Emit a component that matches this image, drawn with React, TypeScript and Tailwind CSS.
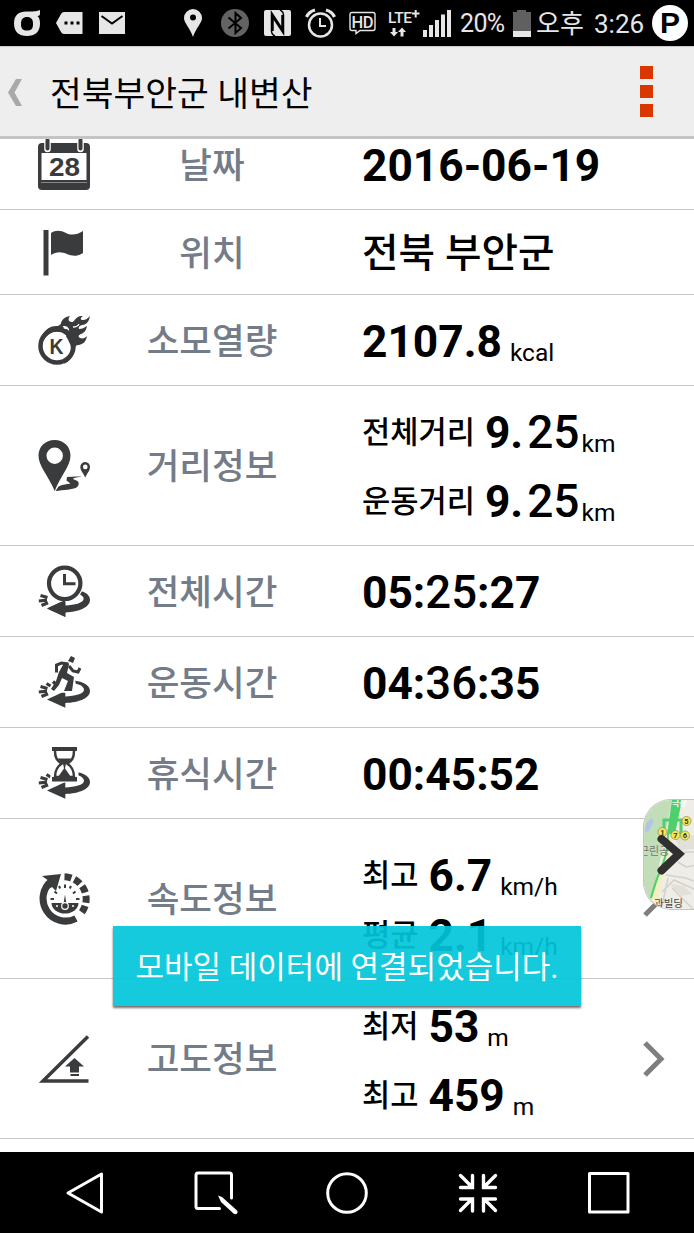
import type {ReactNode} from 'react';

const DARK = '#393b3d';

function CalendarIcon() {
  return (
    <svg width="52" height="52" viewBox="0 0 52 52">
      <rect x="0" y="5" width="52" height="47" rx="4" fill={DARK} />
      <rect x="3.5" y="15" width="45" height="27" fill="#fff" />
      <path d="M3 44.5h46" stroke="#85878a" strokeWidth="1" />
      <path d="M9.5 3v8M42.5 3v8" stroke="#fff" strokeWidth="6.500" strokeLinecap="round" />
      <path d="M9.5 2v8.500M42.500 2v8.500" stroke={DARK} strokeWidth="4" strokeLinecap="round" />
      <text
        x="26.500"
        y="38"
        textAnchor="middle"
        textLength="31"
        lengthAdjust="spacingAndGlyphs"
        fontFamily="Liberation Sans, sans-serif"
        fontWeight="bold"
        fontSize="25"
        fill={DARK}
      >
        28
      </text>
    </svg>
  );
}

function FlagIcon() {
  return (
    <svg width="52" height="52" viewBox="0 0 52 52" fill={DARK}>
      <rect x="5.500" y="4" width="5" height="45.500" />
      <path d="M13 7c5-3.500 10-2.500 15 0s11 2 17-2v22c-6 4-11 3-16 1s-10-3-16 1z" />
    </svg>
  );
}

function CalorieIcon() {
  return (
    <svg width="52" height="52" viewBox="0 0 52 52">
      <circle cx="19" cy="32" r="16.500" fill="none" stroke={DARK} strokeWidth="4.500" />
      <path d="M4 21Q10 11 20 12l3-2 3 4-3 4Q12 15 5 27z" fill={DARK} />
      <path
        d="M23 12c-1-5 3-9 9-10-2 3-2 5 1 6 4 1 4-7 12-6-3 2-3 4 0 4 3 0 5-2 7-4-1 6-4 9-8 9-3 1-4 2-3 4 3 0 5-1 8-3-1 5-3 7-6 8-3 1-3 3-1 4 3 1 5 0 7-2-1 6-4 8-8 9-3 0-4 1-4 4-1 7-5 12-11 15 6-8 9-16 5-22-1-4-3-4-3-7-2-1-4-2-3-5 2-2 5-1 6 1 1-2-2-5-4-5-2 0-3 0-4 0z"
        fill={DARK}
      />
      <path d="M35 13c3 0 5-1 6-3" fill="none" stroke="#fff" strokeWidth="1.300" />
      <text
        x="18.500"
        y="40"
        textAnchor="middle"
        fontFamily="Liberation Sans, sans-serif"
        fontWeight="bold"
        fontSize="22"
        textLength="14"
        lengthAdjust="spacingAndGlyphs"
        fill={DARK}
      >
        K
      </text>
    </svg>
  );
}

function RouteIcon() {
  return (
    <svg width="52" height="52" viewBox="0 0 52 52" fill={DARK}>
      <path
        fillRule="evenodd"
        d="M16.700 0C7 0 .5 7 .5 15.500.500 26 10 35 16.700 51 23 35 32.500 26 32.500 15.500 32.500 7 26 0 16.700 0zm0 7.500a8.200 8.200 0 1 1 0 16.400 8.200 8.200 0 0 1 0-16.400z"
      />
      <path
        fillRule="evenodd"
        d="M47.300 22a5 5 0 0 0-5 5c0 3.500 3 6 5 10.500 2-4.500 4.700-7 4.700-10.500a4.800 4.800 0 0 0-4.700-5zm0 2.600a2.300 2.300 0 1 1 0 4.600 2.300 2.300 0 0 1 0-4.600z"
      />
      <path d="M47 36l-18 1-.5 3.500 4 3-8.500 1.500-3.500 1.500-3 4.500c8-1 17-1.500 21-3.500 2.500-1.500 3-5 1-6.500l-4.500-2c1-1.500 4-1.500 11.500-3z" />
    </svg>
  );
}

// Curved arrow shared by the three duration icons
function OrbitArrow({open = false}: {open?: boolean}) {
  return (
    <>
      <path
        d={
          open
            ? 'M36 24.500C47 26 52 30 52 35c0 7-11 11.500-24.700 12v4.800L9 43.500 27.300 35v5.500C37 40 45.500 38 46 34 46 30.500 42 28.500 37 27.500z'
            : 'M42.500 26C50 28 52 31.500 52 35c0 7-11 12-24.700 12.500v4.500L9 43.500 27.300 35v5.500C37 40 44.500 38 45.500 34.500 46.200 32 44 30.500 41 29z'
        }
        fill={DARK}
      />
      <path d="M3.500 40.500l6.500-2.800M.8 36l8.200-.8M2.500 30.500l7 2" stroke={DARK} strokeWidth="3.200" />
      {open && <path d="M8.500 27.500l4 2.500M15 25.500l2.500 2.500" stroke={DARK} strokeWidth="3.200" />}
    </>
  );
}

function ClockIcon() {
  return (
    <svg width="52" height="52" viewBox="0 0 52 52">
      <OrbitArrow />
      <circle cx="26.700" cy="18.300" r="19" fill="#fff" />
      <path d="M9 43.500L27.300 35v16.800z" fill={DARK} />
      <circle cx="26.700" cy="18.300" r="15.700" fill="#fff" stroke={DARK} strokeWidth="4.200" />
      <path d="M26.500 9v9.700h11" fill="none" stroke={DARK} strokeWidth="3" />
    </svg>
  );
}

function RunnerIcon() {
  return (
    <svg width="52" height="52" viewBox="0 0 52 52">
      <OrbitArrow open />
      <path d="M28 17l9 6 2 13-10 1-14-1 8-13z" fill="#fff" />
      <path d="M33 0l4 2-2 5-5-2z" fill={DARK} />
      <path
        d="M18.500 16.500V9l5-2 7 1M31 10l4 5 5 1 2-4"
        fill="none"
        stroke={DARK}
        strokeWidth="3"
      />
      <path
        d="M26 7l5 1-2 9 7 4-2 14h-8l4-10-6-3-3 7-5 6-3-2 5-8 3-9z"
        fill={DARK}
      />
    </svg>
  );
}

function HourglassIcon() {
  return (
    <svg width="52" height="52" viewBox="0 0 52 52">
      <OrbitArrow open />
      <path d="M12.500 1h28v34.500h-28z" fill="#fff" />
      <path d="M14 0h25v4H14zM14 30h25v4.500H14z" fill={DARK} />
      <path
        d="M17 4c0 7 2 10 7 12.500-5 3-7 7-7 13.500h19c0-6.500-2-10.500-7-13.500 5-2.500 7-5.500 7-12.500"
        fill="#fff"
        stroke={DARK}
        strokeWidth="2.500"
      />
      <path d="M19 11.500h15l-6 5-1 5 6 8.500H20l6-8.500-1-5z" fill={DARK} />
    </svg>
  );
}

function GaugeIcon() {
  return (
    <svg width="52" height="52" viewBox="0 0 52 52">
      <path d="M13.500 8A22.500 22.500 0 0 0 38 45.500" fill="none" stroke={DARK} strokeWidth="7" />
      <path d="M4 3l19-2-5 17-4-4-5 3 2-9z" fill={DARK} />
      <path
        d="M26.500 3.800A22.300 22.300 0 0 1 42 41.500"
        fill="none"
        stroke={DARK}
        strokeWidth="7"
        strokeDasharray="7 3.300"
      />
      <path d="M13.500 30h27a13.500 10.500 0 0 1-27 0z" fill={DARK} />
      <path
        d="M12.500 26h3.500M38 26h3.500M16.500 18.500l2.500 2M35 20.500l2.500-2M21 13l1.200 2.500M33 13l-1.200 2.500M27 11.500v3.500"
        stroke={DARK}
        strokeWidth="2"
      />
      <path d="M25.500 31L27 21.500l1.500 9.500z" fill={DARK} />
      <circle cx="27" cy="33" r="3.300" fill={DARK} stroke="#fff" strokeWidth="1.200" />
      <path d="M18 33h2M34 33h2" stroke="#fff" strokeWidth="1.500" />
    </svg>
  );
}

function SlopeIcon() {
  return (
    <svg width="52" height="52" viewBox="0 0 52 52">
      <path d="M50 3.500L5 48h45.500" fill="none" stroke={DARK} strokeWidth="3.500" />
      <path d="M36.500 25l9.500 8.500h-5v6h-9v-6h-5zM32.500 41h8.500v2h-8.500z" fill={DARK} />
    </svg>
  );
}

function Chevron() {
  return (
    <svg className="shrink-0" width="22" height="38" viewBox="0 0 22 38" fill="none">
      <path d="M2 3l16 16L2 35" stroke="#7e7e7e" strokeWidth="5" />
    </svg>
  );
}

interface RowProps {
  icon: ReactNode;
  label: string;
  height?: string;
  more?: boolean;
  children: ReactNode;
}

function Row({icon, label, height = 'h-[91px]', more, children}: RowProps) {
  return (
    <div className={`flex items-center border-b border-[#c6c6c6] pl-[38px] ${height}`}>
      {icon}
      <span className="mt-[5px] w-[244px] text-center text-[35.500px] leading-none font-medium text-[#737c88]">
        {label}
      </span>
      <div className="ml-7 w-[281px] pt-1 whitespace-nowrap">{children}</div>
      {more && <Chevron />}
    </div>
  );
}

function Line({children, height = 'h-[60px] leading-[60px]'}: {children: ReactNode; height?: string}) {
  return <div className={`flex items-baseline ${height}`}>{children}</div>;
}

function Big({children}: {children: ReactNode}) {
  return <span className="text-[44.300px] font-bold">{children}</span>;
}

function Mid({children}: {children: ReactNode}) {
  return <span className="text-[45.500px] font-medium">{children}</span>;
}

function Unit({children, gap = 'ml-2'}: {children: ReactNode; gap?: string}) {
  return <span className={`relative top-[4px] text-[24.500px] ${gap}`}>{children}</span>;
}

function Name({children}: {children: ReactNode}) {
  return (
    <span className="relative -top-[5px] mr-[10px] text-[30.700px] font-medium">{children}</span>
  );
}

function StatusBar() {
  return (
    <div className="flex h-[46px] items-center bg-black text-[#e6e6e6]">
      <svg className="ml-[14px]" width="26" height="26" viewBox="0 0 26 26">
        <path
          fillRule="evenodd"
          fill="#e6e6e6"
          d="M26 0v3.500q0 2.500-2.500 2.500 2.500 2 2.500 7.500C26 22 21 26 13 26S0 22 0 13.500 5 1.500 12 1.500c7 0 11 0 14-1.500zM13 7c-4 0-6 2-6 7s2 6.500 6 6.500 6-1.500 6-6.500-2-7-6-7z"
        />
      </svg>
      <svg className="ml-4" width="27" height="22" viewBox="0 0 27 22">
        <path d="M8 0h18.500v22H8q-2 0-3-2L0 11l5-9q1-2 3-2z" fill="#e6e6e6" />
        <path d="M8.500 9.500h3v3h-3zM14.500 9.500h3v3h-3zM20.500 9.500h3v3h-3z" />
      </svg>
      <svg className="ml-4" width="26" height="22" viewBox="0 0 26 22">
        <path d="M0 0h26v22H0z" fill="#e6e6e6" />
        <path d="M2.500 4L13 11.500 23.500 4" fill="none" stroke="#000" strokeWidth="2" />
      </svg>
      <svg className="ml-[59px]" width="18" height="28" viewBox="0 0 18 28">
        <path d="M9 0a9 9 0 0 0-9 9c0 5 6 10 9 19 3-9 9-14 9-19a9 9 0 0 0-9-9z" fill="#e6e6e6" />
        <circle cx="9" cy="8.500" r="3" />
      </svg>
      <svg className="ml-[19px]" width="28" height="28" viewBox="0 0 28 28">
        <circle cx="14" cy="14" r="14" fill="#636363" />
        <path d="M7.500 8.500L20 19l-5.500 5V4L20 9 7.500 19.500" fill="none" stroke="#000" strokeWidth="2" />
      </svg>
      <svg className="ml-[15px]" width="27" height="26" viewBox="0 0 27 26">
        <rect width="27" height="26" rx="2" fill="#e6e6e6" />
        <path
          d="M11 26q-3.500-1.500-3.500-5V2.500L18 18.500V5M16 0q3.500 1.500 3.500 5v18.500L9 7.500V21"
          fill="none"
          stroke="#000"
          strokeWidth="1.500"
        />
      </svg>
      <svg className="ml-[14px]" width="31" height="30" viewBox="0 0 31 30" fill="none" stroke="#e6e6e6">
        <circle cx="15.500" cy="17" r="11.500" strokeWidth="2.500" />
        <path d="M15 10v8h6" strokeWidth="2" />
        <path d="M1.500 9Q4 3.500 10 2M29.500 9Q27 3.500 21 2" strokeWidth="3.200" />
      </svg>
      <svg className="ml-[13px]" width="28" height="24" viewBox="0 0 28 24">
        <path
          d="M3 1.500h21q2 0 2 2v14q0 2-2 2H11L7 22.500v-3H3q-2 0-2-2v-14q0-2 2-2z"
          fill="none"
          stroke="#e6e6e6"
          strokeWidth="1.400"
        />
        <text
          x="13.500"
          y="16.500"
          textAnchor="middle"
          textLength="22"
          fontFamily="Roboto, sans-serif"
          fontWeight="500"
          fontSize="16.500"
          fill="#e6e6e6"
        >
          HD
        </text>
      </svg>
      <svg className="ml-[10px]" width="34" height="30" viewBox="0 0 34 30">
        <text
          x="1"
          y="14.500"
          textLength="24"
          fontFamily="Roboto, sans-serif"
          fontWeight="500"
          fontSize="15.500"
          fill="#e6e6e6"
        >
          LTE
        </text>
        <path d="M25 5.500h7.500M28.700 2v7.500" stroke="#e6e6e6" strokeWidth="2" />
        <path d="M5.500 20h3v4h2.500L7 28.500 3 24h2.500zM13.500 28.500h3v-4.500h2.500L15 19.500l-4 4.500h2.500z" fill="#e6e6e6" />
      </svg>
      <svg className="ml-[2px]" width="28" height="28" viewBox="0 0 28 28" fill="#e6e6e6">
        <path d="M0 21h4v7H0zM6 16h4v12H6zM12 11h4v17h-4zM18 5.500h4V28h-4zM24 1h4v27h-4z" />
      </svg>
      <span className="mt-0.5 ml-[9px] w-[46px] text-[25px] tracking-tight">20%</span>
      <svg className="ml-[7px]" width="18" height="27" viewBox="0 0 18 27">
        <path d="M4 0h9v2h5v25H0V2h4z" fill="#606060" />
        <path d="M0 21h18v6H0z" fill="#e6e6e6" />
      </svg>
      <span className="mt-0.5 ml-[5px] w-[58px] text-[26px] whitespace-nowrap">오후</span>
      <span className="mt-0.5 w-[58px] text-[26px]">3:26</span>
      <span className="flex h-9 w-9 items-center justify-center rounded-full bg-white font-['Liberation_Sans'] text-[30px] leading-none font-bold text-black">
        P
      </span>
    </div>
  );
}

function TitleBar() {
  return (
    <header className="relative z-10 flex h-[93px] items-center border-t border-b-3 border-t-[#c8c8c8] border-b-[#c4c4c4] bg-[#eeeeee]">
      <svg className="mt-0.5 ml-2" width="15" height="27" viewBox="0 0 15 27">
        <path d="M8 0h6L6.500 13.500 14 27H8L0 13.500z" fill="#a9a9a9" />
      </svg>
      <h1 className="mt-1.5 ml-[27px] text-[34.500px] leading-none">전북부안군 내변산</h1>
      <div className="mr-[41px] ml-auto flex flex-col gap-[6px]">
        <i className="size-[13px] bg-[#d93600]" />
        <i className="size-[13px] bg-[#d93600]" />
        <i className="size-[13px] bg-[#d93600]" />
      </div>
    </header>
  );
}

function MapHandle() {
  return (
    <div className="absolute top-[799px] right-0 h-[111px] w-[51px] overflow-hidden rounded-l-[28px] border border-r-0 border-[#c4c4c4]">
      <svg width="51" height="111" viewBox="0 0 51 111">
        <path d="M0 0h51v111H0z" fill="#efede8" />
        <path d="M0 0h28L6 111H0z" fill="#c2deb9" />
        <path d="M2 24l5-6 3 3-5 10-4 2z" fill="#b3c4e6" />
        <path d="M24 30l-6 32-11 38 4 11 12-50 8-30z" fill="#f4efbf" />
        <path
          d="M40 52h12M34 62l8 5 10-2M22 75l20 3 10 4M18 92l12-12 20 9M28 88l22 22M24 78l-6 28"
          fill="none"
          stroke="#d4d1cb"
          strokeWidth="1.500"
        />
        <path d="M31 38l20-3v14l-15 1zM26 84l14 2 8 8-12 2z" fill="#e3e0da" />
        <path d="M28 0h10l-7 34h-8z" fill="#4fcf6e" />
        <path d="M20 32V20h20M37 20v14" fill="none" stroke="#4fcf6e" strokeWidth="3" />
        <path d="M24 34q0 18-6 32T7 98" fill="none" stroke="#4fcf6e" strokeWidth="2" />
        <g fill="#f3e75c" stroke="#8d8a4c" strokeWidth=".7">
          <circle cx="42.500" cy="21" r="4.500" />
          <circle cx="18.500" cy="32" r="4.500" />
          <circle cx="31.500" cy="35" r="4.500" />
          <circle cx="41" cy="35.500" r="4.500" />
        </g>
        <g fontFamily="Roboto, sans-serif" fontSize="7.500" fontWeight="bold" textAnchor="middle" fill="#333">
          <text x="42.500" y="23.700">5</text>
          <text x="18.500" y="34.700">1</text>
          <text x="31.500" y="37.700">7</text>
          <text x="41" y="38.200">6</text>
        </g>
        <g fontFamily="Noto Sans CJK KR, sans-serif">
          <text x="28" y="6" fontSize="8" fontWeight="bold" fill="#fff">극장</text>
          <text x="-5" y="55" fontSize="11" fill="#77776f">근린공</text>
          <text x="10" y="107" fontSize="10.500" fill="#444">과빌딩</text>
        </g>
        <path
          d="M17.500 39L35 54 17.500 70.500"
          fill="none"
          stroke="#303030"
          strokeWidth="8"
          strokeLinecap="round"
        />
      </svg>
    </div>
  );
}

function NavBar() {
  return (
    <nav className="grid h-[81px] grid-cols-[repeat(5,131px)] place-items-center content-center justify-center bg-black">
      <svg width="44" height="44" viewBox="0 0 44 44" fill="none" stroke="#fff" strokeWidth="3">
        <path d="M38.500 3v38L5 22z" strokeLinejoin="round" />
      </svg>
      <svg width="44" height="44" viewBox="0 0 44 44" fill="none" stroke="#fff" strokeWidth="3">
        <path d="M25.500 37.500H4q-2 0-2-2V4q0-2 2-2h31.500q2 0 2 2v23" strokeLinecap="round" />
        <path d="M24 24.500l4 1.500 14.500 13q2 2 .5 3.500t-3.500 0L27 31z" fill="#fff" stroke="none" />
      </svg>
      <svg width="44" height="44" viewBox="0 0 44 44" fill="none" stroke="#fff" strokeWidth="3">
        <circle cx="22" cy="22" r="19.300" />
      </svg>
      <svg width="44" height="44" viewBox="0 0 44 44" fill="none" stroke="#fff" strokeWidth="3.400" strokeLinecap="round">
        <path d="M4.500 4.500L16 16M4.500 16.500h12v-12M39.500 4.500L28 16M27.500 4.500v12h12M4.500 39.500L16 28M4.500 28h12v12M39.500 39.500L28 28M39.500 28h-12v12" />
      </svg>
      <svg width="44" height="44" viewBox="0 0 44 44" fill="none" stroke="#fff" strokeWidth="3">
        <path d="M2.500 2.500h38.500v38.500H2.500z" strokeLinejoin="round" />
      </svg>
    </nav>
  );
}

export default function App() {
  return (
    <div className="relative flex h-[1233px] w-[694px] flex-col overflow-hidden bg-white font-['Roboto','Noto_Sans_CJK_KR',sans-serif] text-black">
      <StatusBar />
      <TitleBar />
      <main className="-mt-5 flex-1">
        <Row icon={<CalendarIcon />} label="날짜">
          <Line>
            <Big>2016-06-19</Big>
          </Line>
        </Row>
        <Row icon={<FlagIcon />} label="위치" height="h-[85px]">
          <div className="text-[39.700px] leading-[60px] font-medium">전북 부안군</div>
        </Row>
        <Row icon={<CalorieIcon />} label="소모열량">
          <Line>
            <Big>2107.8</Big>
            <Unit>kcal</Unit>
          </Line>
        </Row>
        <Row icon={<RouteIcon />} label="거리정보" height="h-[160px]">
          {['전체거리', '운동거리'].map((name) => (
            <Line key={name} height="h-[69px] leading-[67px]">
              <Name>{name}</Name>
              <Big>9.</Big>
              <span className="ml-1 text-[46px] font-medium">25</span>
              <Unit gap="ml-0.5">km</Unit>
            </Line>
          ))}
        </Row>
        <Row icon={<ClockIcon />} label="전체시간">
          <Line>
            <Big>05:</Big>
            <Mid>25</Mid>
            <Big>:27</Big>
          </Line>
        </Row>
        <Row icon={<RunnerIcon />} label="운동시간">
          <Line>
            <Big>04:</Big>
            <Mid>36</Mid>
            <Big>:35</Big>
          </Line>
        </Row>
        <Row icon={<HourglassIcon />} label="휴식시간">
          <Line>
            <Big>00:45:52</Big>
          </Line>
        </Row>
        <Row icon={<GaugeIcon />} label="속도정보" height="h-[160px]" more>
          <div className="pt-2.5">
            <Line>
              <Name>최고</Name>
              <Big>6.7</Big>
              <Unit>km/h</Unit>
            </Line>
            <Line>
              <Name>평균</Name>
              <Big>2.1</Big>
              <Unit>km/h</Unit>
            </Line>
          </div>
        </Row>
        <Row icon={<SlopeIcon />} label="고도정보" height="h-[160px]" more>
          <div className="pt-0.5">
            <Line height="h-[69px] leading-[69px]">
              <Name>최저</Name>
              <Big>53</Big>
              <Unit>m</Unit>
            </Line>
            <Line height="h-[69px] leading-[69px]">
              <Name>최고</Name>
              <Big>459</Big>
              <Unit>m</Unit>
            </Line>
          </div>
        </Row>
      </main>
      <NavBar />
      <MapHandle />
      <div className="absolute top-[926px] left-[113px] flex h-20 w-[468px] items-center justify-center bg-[#00c5d9]/92 pt-1 text-[31px] whitespace-nowrap text-white shadow-[0_2px_2px_rgba(70,50,50,0.7)]">
        모바일 데이터에 연결되었습니다.
      </div>
    </div>
  );
}
